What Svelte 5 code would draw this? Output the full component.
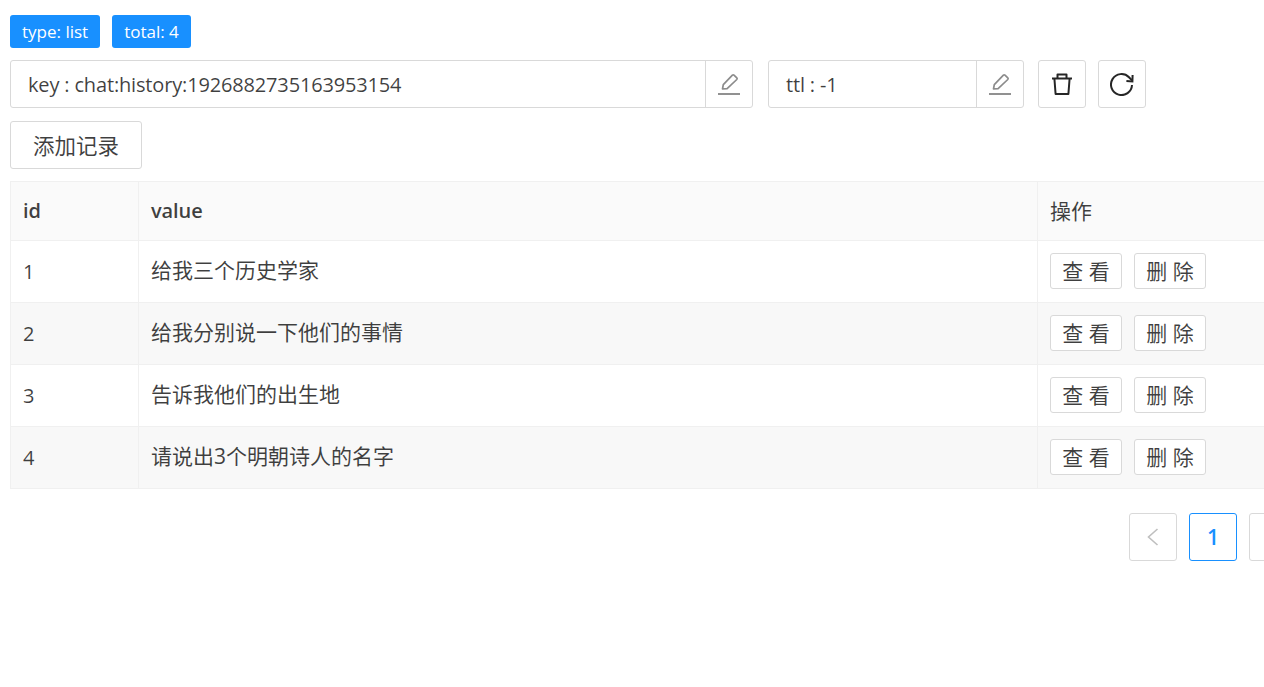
<script>
    let rows = [
        { id: 1, value: "给我三个历史学家" },
        { id: 2, value: "给我分别说一下他们的事情" },
        { id: 3, value: "告诉我他们的出生地" },
        { id: 4, value: "请说出3个明朝诗人的名字" }
    ];
</script>

<svelte:head>
    <title>redis list</title>
</svelte:head>

{#snippet editIcon()}
    <svg class="edit" viewBox="0 0 24 24" width="24" height="24" fill="none" stroke="#8c8c8c" stroke-width="1.7">
        <path d="M5.5 17 L6.3 12.6 L15.4 3.2 Q16.2 2.5 17 3.2 L19.8 5.9 Q20.5 6.7 19.8 7.5 L10.1 16.6 Z" stroke-linejoin="round"/>
        <path d="M1 22 H23" stroke-width="1.9"/>
    </svg>
{/snippet}

<div class="page">
    <div class="tags">
        <span class="tag">type: list</span>
        <span class="tag">total: 4</span>
    </div>

    <div class="toolbar">
        <div class="field key">
            <span class="label">key : chat:history:1926882735163953154</span>
            <span class="addon">{@render editIcon()}</span>
        </div>
        <div class="field ttl">
            <span class="label">ttl : -1</span>
            <span class="addon">{@render editIcon()}</span>
        </div>
        <button class="icon-btn del" aria-label="delete">
            <svg viewBox="0 0 24 24" width="24" height="24" fill="none" stroke="#262626" stroke-width="2" stroke-linejoin="round">
                <path d="M2 6.5 H22"/>
                <path d="M7.5 6.5 V2.6 H16.5 V6.5"/>
                <path d="M4.4 6.5 L5.6 22 H18.4 L19.6 6.5"/>
            </svg>
        </button>
        <button class="icon-btn" aria-label="reload">
            <svg viewBox="0 0 24 24" width="24" height="24" fill="none" stroke="#262626" stroke-width="2">
                <path d="M22 13 A10.5 10.5 0 1 1 19 5.2 L22 8.4"/>
                <path d="M22.6 3 L22.4 9.4 L16.4 9"/>
            </svg>
        </button>
    </div>

    <button class="add">添加记录</button>

    <table>
        <thead>
            <tr>
                <th class="col-id">id</th>
                <th class="col-value">value</th>
                <th class="col-ops">操作</th>
            </tr>
        </thead>
        <tbody>
            {#each rows as row, i}
                <tr class:alt={i % 2 === 1}>
                    <td class="num">{row.id}</td>
                    <td class="text">{row.value}</td>
                    <td class="ops">
                        <div class="actions">
                            <button class="small">查 看</button>
                            <button class="small">删 除</button>
                        </div>
                    </td>
                </tr>
            {/each}
        </tbody>
    </table>

    <div class="pager">
        <span class="page-item prev">
            <svg viewBox="0 0 16 18" width="16" height="18" fill="none" stroke="#bfbfbf" stroke-width="1.6">
                <path d="M12.5 1 L3.5 9 L12.5 17"/>
            </svg>
        </span>
        <span class="page-item current">1</span>
        <span class="page-item"></span>
    </div>
</div>

<style>
    :global(body) {
        margin: 0;
        overflow: hidden;
        background: #fff;
    }

    .page {
        width: 1264px;
        height: 687px;
        overflow: hidden;
        box-sizing: border-box;
        padding: 15px 0 0 10px;
        font-family: "Open Sans", "Noto Sans CJK SC", sans-serif;
        color: rgba(0, 0, 0, 0.75);
        font-size: 20px;
    }

    .tags {
        display: flex;
        gap: 12px;
        height: 33px;
    }

    .tag {
        background: #1890ff;
        color: #fff;
        border-radius: 3px;
        padding: 0 12px;
        font-size: 17px;
        line-height: 33px;
    }

    .toolbar {
        display: flex;
        margin-top: 12px;
        height: 48px;
    }

    .field {
        display: flex;
        box-sizing: border-box;
        border: 1px solid #d9d9d9;
        border-radius: 3px;
        align-items: center;
    }

    .key { width: 743px; }
    .ttl { width: 256px; margin-left: 15px; }

    .label {
        flex: 1;
        padding-left: 17px;
        font-size: 20px;
        letter-spacing: -0.16px;
        white-space: nowrap;
    }

    .addon {
        width: 47px;
        box-sizing: border-box;
        height: 100%;
        border-left: 1px solid #d9d9d9;
        display: flex;
        align-items: center;
        justify-content: center;
    }

    .icon-btn {
        width: 48px;
        height: 48px;
        margin-left: 12px;
        padding: 0;
        background: #fff;
        border: 1px solid #d9d9d9;
        border-radius: 3px;
        display: flex;
        align-items: center;
        justify-content: center;
    }

    .del { margin-left: 14px; }

    .add {
        display: block;
        width: 132px;
        height: 48px;
        margin-top: 13px;
        padding: 2px 0 0;
        background: #fff;
        border: 1px solid #d9d9d9;
        border-radius: 3px;
        font: inherit;
        font-size: 21.5px;
        line-height: 28px;
        color: inherit;
    }

    table {
        width: 1370px;
        margin-top: 12px;
        border-collapse: collapse;
        table-layout: fixed;
    }

    th, td {
        box-sizing: border-box;
        border: 1px solid #f0f0f0;
        padding: 0 12px;
        text-align: left;
        font-size: 20px;
        line-height: 28px;
    }

    td {
        height: 62px;
    }

    .text {
        font-size: 21px;
        padding-bottom: 3px;
    }

    th {
        height: 59px;
        background: #fafafa;
        font-weight: 600;
        letter-spacing: -0.1px;
    }

    .col-id { width: 128px; }
    .col-value { width: 899px; }

    .col-ops {
        font-weight: 400;
        font-size: 21px;
        letter-spacing: 0;
    }

    tr.alt td {
        background: #f8f8f8;
    }

    .actions {
        display: flex;
        gap: 12px;
        margin-bottom: 2px;
    }

    .small {
        width: 72px;
        height: 36px;
        padding: 0;
        background: #fff;
        border: 1px solid #d9d9d9;
        border-radius: 3px;
        font: inherit;
        font-size: 21px;
        line-height: 28px;
        color: inherit;
    }

    .pager {
        display: flex;
        gap: 12px;
        margin-top: 24px;
        margin-left: 1119px;
    }

    .page-item {
        flex: none;
        width: 48px;
        height: 48px;
        box-sizing: border-box;
        border: 1px solid #d9d9d9;
        border-radius: 3px;
        display: flex;
        align-items: center;
        justify-content: center;
        font-size: 21px;
    }

    .current {
        border-color: #1890ff;
        color: #1890ff;
        font-weight: 600;
    }
</style>
